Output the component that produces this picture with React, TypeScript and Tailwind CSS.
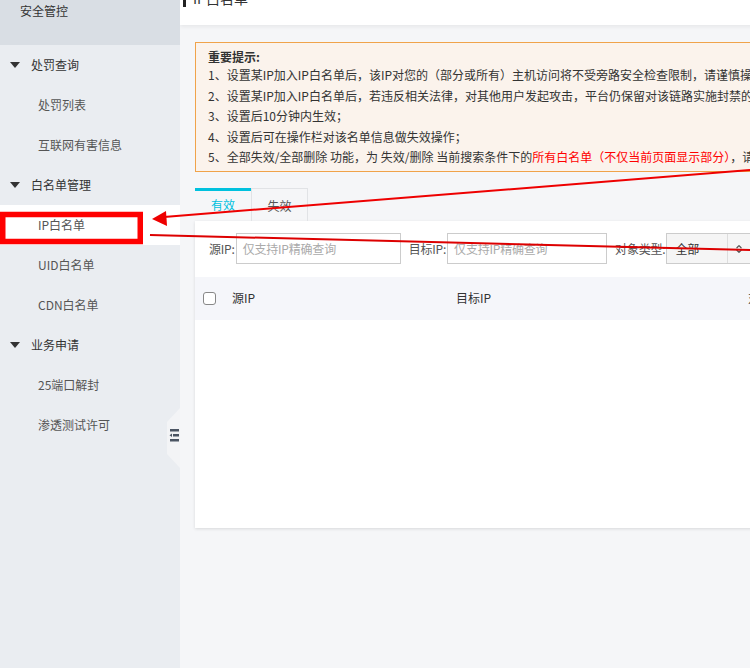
import { ChevronsUpDown } from 'lucide-react';

const font = { fontFamily: '"Noto Sans CJK SC", "Noto Sans", sans-serif' };

function Caret() {
    return (
        <svg width="10" height="6" viewBox="0 0 10 6" className="mr-[11px] ml-[10px]">
            <path d="M0 0 L10 0 L5 6 Z" fill="#333" />
        </svg>
    );
}

function GroupTitle({ label }: { label: string }) {
    return (
        <div className="h-10 flex items-center text-[12px] text-[#333]">
            <Caret />
            {label}
        </div>
    );
}

function SubItem({ label, active }: { label: string; active?: boolean }) {
    return (
        <div className={`h-10 flex items-center pl-[38px] text-[12px] text-[#555] ${active ? 'bg-white' : ''}`}>
            {label}
        </div>
    );
}

export default function App() {
    return (
        <div className="relative w-[750px] h-[668px] flex overflow-hidden bg-[#f5f6f8]" style={font}>
            {/* SIDEBAR */}
            <div className="w-[180px] flex-shrink-0 bg-[#eaedf1] flex flex-col">
                <div className="h-[45px] bg-[#d9dee4] pl-5 pt-[1px] text-[12px] leading-5 text-[#333]">安全管控</div>
                <GroupTitle label="处罚查询" />
                <SubItem label="处罚列表" />
                <SubItem label="互联网有害信息" />
                <GroupTitle label="白名单管理" />
                <SubItem label="IP白名单" active />
                <SubItem label="UID白名单" />
                <SubItem label="CDN白名单" />
                <GroupTitle label="业务申请" />
                <SubItem label="25端口解封" />
                <SubItem label="渗透测试许可" />
            </div>

            {/* MAIN */}
            <div className="flex-1 overflow-hidden">
                <div className="w-[900px]">
                    <div className="h-[25px] bg-white shadow-[0_2px_4px_rgba(0,0,0,0.06)] flex items-start pl-[3px]">
                        <div className="w-[3px] h-[7px] bg-[#222]" />
                        <span className="ml-[7px] -mt-[12px] text-[14px] leading-[20px] text-[#333]">IP白名单</span>
                    </div>

                    <div className="pl-[15px] pt-[17px]">
                        {/* notice */}
                        <div className="border border-[#f0a34a] bg-[#fbf3ec] pl-3 pt-[6px] pb-[3px] text-[12px] text-[#333] whitespace-nowrap">
                            <div className="font-bold leading-4">重要提示:</div>
                            <div className="leading-[20.5px]">1、设置某IP加入IP白名单后，该IP对您的（部分或所有）主机访问将不受旁路安全检查限制，请谨慎操作；</div>
                            <div className="leading-[20.5px]">2、设置某IP加入IP白名单后，若违反相关法律，对其他用户发起攻击，平台仍保留对该链路实施封禁的权利；</div>
                            <div className="leading-[20.5px]">3、设置后10分钟内生效；</div>
                            <div className="leading-[20.5px]">4、设置后可在操作栏对该名单信息做失效操作；</div>
                            <div className="leading-[20.5px]">
                                5、全部失效/全部删除 功能，为 失效/删除 当前搜索条件下的
                                <span className="text-[#f00]">所有白名单（不仅当前页面显示部分）</span>，请谨慎操作。
                            </div>
                        </div>

                        {/* tabs */}
                        <div className="mt-[16px] flex text-[12px]">
                            <div className="w-[56px] h-[33px] border-t-[3px] border-[#00c1de] flex items-center justify-center text-[#00c1de] pb-[1px]">有效</div>
                            <div className="w-[57px] h-[33px] border border-b-0 border-[#e1e3e6] flex items-center justify-center text-[#555] pt-[2px]">失效</div>
                        </div>

                        {/* panel */}
                        <div className="bg-white h-[307px] shadow-[0_1px_3px_rgba(0,0,0,0.12)]">
                            <div className="flex items-center h-[56px] pl-[14px] text-[12px] text-[#555] tracking-[-0.2px]">
                                <span>源IP:</span>
                                <div className="ml-[1px] w-[165px] h-[31px] border border-[#ccc] flex items-center pl-[6px] text-[#aaa]">仅支持IP精确查询</div>
                                <span className="ml-2">目标IP:</span>
                                <div className="ml-[1px] w-[160px] h-[31px] border border-[#ccc] flex items-center pl-[6px] text-[#aaa]">仅支持IP精确查询</div>
                                <span className="ml-2">对象类型:</span>
                                <div className="ml-[1px] w-[100px] h-[31px] border border-[#ccc] bg-[#f5f5f5] flex items-center">
                                    <span className="w-[60px] pl-2 text-[#333]">全部</span>
                                    <div className="h-full border-l border-[#ddd] flex items-center pl-[6px]">
                                        <ChevronsUpDown size={10} color="#555" strokeWidth={3} />
                                    </div>
                                </div>
                            </div>
                            <div className="h-[43px] bg-[#f5f6fa] flex items-center text-[12px] text-[#333]">
                                <div className="ml-[8px] w-[13px] h-[13px] border border-[#888] rounded-[3px] bg-white" />
                                <span className="ml-[16px] w-[224px]">源IP</span>
                                <span className="w-[292px]">目标IP</span>
                                <span>对象类型</span>
                            </div>
                        </div>
                    </div>
                </div>
            </div>

            {/* collapse handle */}
            <div className="absolute left-[166px] top-[408px]">
                <svg width="16" height="60" viewBox="0 0 16 60">
                    <path d="M14 0 L1 14 L1 46 L14 60 Z" fill="#f3f4f6" />
                    <rect x="4" y="21" width="9" height="2.5" fill="#4b5563" />
                    <rect x="7" y="26" width="6" height="2.5" fill="#4b5563" />
                    <path d="M3.5 27.25 L6 25.5 L6 29 Z" fill="#4b5563" />
                    <rect x="4" y="31" width="9" height="2.5" fill="#4b5563" />
                </svg>
            </div>

            {/* annotation */}
            <svg className="absolute inset-0 pointer-events-none" width="750" height="668" viewBox="0 0 750 668">
                <rect x="2.75" y="214.5" width="137.5" height="27" fill="none" stroke="#ff0000" strokeWidth="5.5" />
                <line x1="750" y1="170" x2="164" y2="217" stroke="#ee0000" strokeWidth="2" />
                <path d="M152 219 L166 211 L167 226 Z" fill="#ee0000" />
                <line x1="150" y1="235" x2="750" y2="250" stroke="#dd0000" strokeWidth="2" />
            </svg>
        </div>
    );
}
